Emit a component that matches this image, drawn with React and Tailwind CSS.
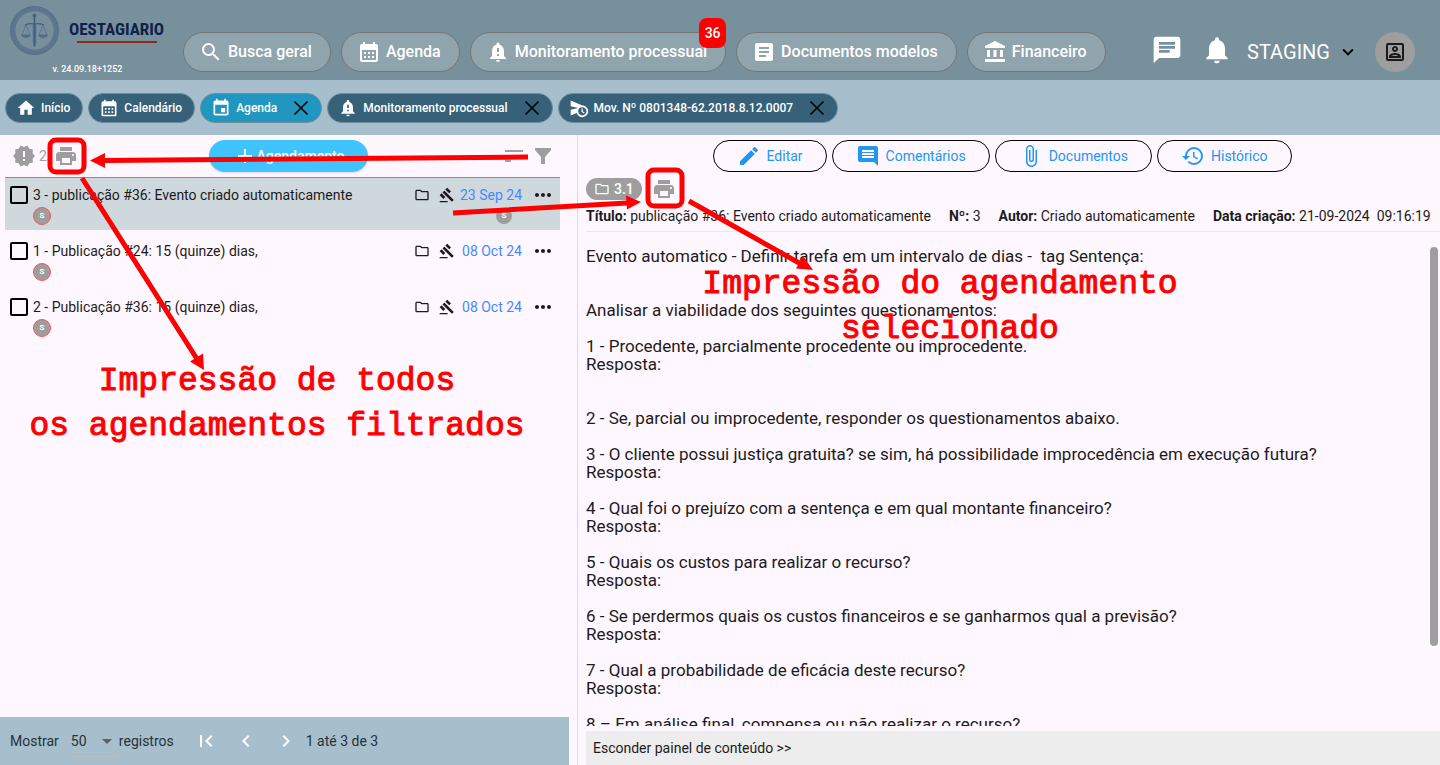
import React, { useState } from 'react';
import {
  MdSearch, MdCalendarMonth, MdNotificationImportant, MdArticle, MdAccountBalance,
  MdChat, MdNotifications, MdKeyboardArrowDown, MdOutlinePortrait, MdHome, MdEvent,
  MdScheduleSend, MdNewReleases, MdPrint, MdSort, MdAdd, MdEdit, MdComment,
  MdAttachFile, MdHistory, MdOutlineFolder, MdGavel, MdMoreHoriz, MdFirstPage,
  MdChevronLeft, MdChevronRight, MdArrowDropDown
} from 'react-icons/md';

const MENU = [
  { label: 'Busca geral', icon: MdSearch },
  { label: 'Agenda', icon: MdCalendarMonth },
  { label: 'Monitoramento processual', icon: MdNotificationImportant, badge: 36 },
  { label: 'Documentos modelos', icon: MdArticle },
  { label: 'Financeiro', icon: MdAccountBalance },
];

const ABAS = [
  { label: 'Início', icon: MdHome },
  { label: 'Calendário', icon: MdCalendarMonth },
  { label: 'Agenda', icon: MdEvent, closable: true },
  { label: 'Monitoramento processual', icon: MdNotificationImportant, closable: true },
  { label: 'Mov. Nº 0801348-62.2018.8.12.0007', icon: MdScheduleSend, closable: true },
];

const AGENDAMENTOS = [
  { id: 3, titulo: '3 - publicação #36: Evento criado automaticamente', data: '23 Sep 24', autor: 'S' },
  { id: 1, titulo: '1 - Publicação #24: 15 (quinze) dias,', data: '08 Oct 24' },
  { id: 2, titulo: '2 - Publicação #36: 15 (quinze) dias,', data: '08 Oct 24' },
];

const ACOES = [
  { label: 'Editar', icon: MdEdit },
  { label: 'Comentários', icon: MdComment },
  { label: 'Documentos', icon: MdAttachFile },
  { label: 'Histórico', icon: MdHistory },
];

const CONTEUDO = `Evento automatico - Definir tarefa em um intervalo de dias -  tag Sentença:


Analisar a viabilidade dos seguintes questionamentos:

1 - Procedente, parcialmente procedente ou improcedente.
Resposta:


2 - Se, parcial ou improcedente, responder os questionamentos abaixo.

3 - O cliente possui justiça gratuita? se sim, há possibilidade improcedência em execução futura?
Resposta:

4 - Qual foi o prejuízo com a sentença e em qual montante financeiro?
Resposta:

5 - Quais os custos para realizar o recurso?
Resposta:

6 - Se perdermos quais os custos financeiros e se ganharmos qual a previsão?
Resposta:

7 - Qual a probabilidade de eficácia deste recurso?
Resposta:

8 – Em análise final, compensa ou não realizar o recurso?`;

const App = () => {
  const [abaAtiva, setAbaAtiva] = useState('Agenda');
  const [selecionado, setSelecionado] = useState(3);

  return (
    <div className="relative flex h-screen flex-col overflow-hidden bg-[#fef7ff] font-['Roboto',sans-serif] text-[#1d1b20]">
      <Header />

      {/* ABAS */}
      <nav className="flex h-[55px] shrink-0 items-center gap-[5px] bg-[#a7bfcd] px-[5px]">
        {ABAS.map((aba) => (
          <Aba key={aba.label} {...aba} ativa={aba.label === abaAtiva} onClick={() => setAbaAtiva(aba.label)} />
        ))}
      </nav>

      <main className="flex min-h-0 flex-1">
        {/* LISTA */}
        <section className="flex w-2/5 flex-col pr-[7px]">
          <div className="flex h-[42px] shrink-0 items-center justify-between pr-[14px] pl-3 text-[#9e9e9e]">
            <div className="flex w-[88px] items-center gap-[3px]">
              <MdNewReleases size={24} />
              <span className="w-3 text-sm">2</span>
              <button aria-label="Imprimir lista"><MdPrint size={24} /></button>
            </div>
            <button className="flex h-8 items-center rounded-full bg-[#40c4ff] px-6 text-sm font-medium text-white shadow-sm">
              <MdAdd size={24} />
              Agendamento
            </button>
            <div className="flex w-[78px] items-center justify-end gap-[5px]">
              <button aria-label="Ordenar"><MdSort size={24} /></button>
              <button aria-label="Filtrar"><FunnelIcon /></button>
            </div>
          </div>

          <ul className="mr-[9px] ml-[5px] flex flex-1 flex-col gap-1 border-t border-[#8f8f8f]">
            {AGENDAMENTOS.map((item) => (
              <Agendamento
                key={item.id}
                {...item}
                ativo={item.id === selecionado}
                onSelect={() => setSelecionado(item.id)}
              />
            ))}
          </ul>

          {/* PAGINAÇÃO */}
          <footer className="flex h-12 shrink-0 items-center bg-[#a7bfcd] pl-[10px] text-sm text-[#263238]">
            <label htmlFor="registros">Mostrar</label>
            <div className="relative ml-3 flex w-12 items-center">
              <select id="registros" defaultValue="50" className="h-8 w-full appearance-none border-b border-[#bdbdbd] bg-transparent outline-none">
                <option>10</option>
                <option>25</option>
                <option>50</option>
              </select>
              <MdArrowDropDown size={24} className="pointer-events-none absolute right-0 text-[#616161]" />
            </div>
            <span>registros</span>
            <div className="ml-3 flex text-white">
              <PageButton icon={MdFirstPage} label="Primeira página" />
              <PageButton icon={MdChevronLeft} label="Página anterior" />
              <PageButton icon={MdChevronRight} label="Próxima página" />
            </div>
            <span>1 até 3 de 3</span>
          </footer>
        </section>

        {/* DETALHES */}
        <section className="ml-px flex min-w-0 flex-1 flex-col border-l border-[#dcdce0] pl-2">
          <div className="flex h-[42px] shrink-0 items-center justify-center gap-[5px] pr-[22px]">
            {ACOES.map(({ label, icon: Icon }) => (
              <button key={label} className="flex h-8 items-center gap-[6px] rounded-full border border-black px-[23px] text-sm text-[#2196f3]">
                <Icon size={24} />
                {label}
              </button>
            ))}
          </div>

          <div className="flex h-6 shrink-0 items-center gap-[10px]">
            <span className="flex h-[22px] items-center gap-1 rounded-full bg-[#9e9e9e] px-2 text-sm font-medium text-white">
              <MdOutlineFolder size={16} />
              3.1
            </span>
            <button aria-label="Imprimir agendamento" className="text-[#9e9e9e]"><MdPrint size={24} /></button>
          </div>

          <div className="flex h-[31px] shrink-0 items-center gap-[18px] border-b border-[#ece6ee] text-sm whitespace-pre">
            <Campo nome="Título" valor="publicação #36: Evento criado automaticamente" />
            <Campo nome="Nº" valor="3" />
            <Campo nome="Autor" valor="Criado automaticamente" />
            <Campo nome="Data criação" valor="21-09-2024  09:16:19" />
          </div>

          <div className="relative mt-[15px] mb-[5px] min-h-0 flex-1 overflow-hidden">
            <p className="text-[17px] leading-[18px] whitespace-pre-wrap">{CONTEUDO}</p>
            <div className="absolute top-0 right-[2px] h-5/6 w-2 rounded-full bg-[#9e9e9e]" />
          </div>

          <button className="h-[34px] shrink-0 bg-[#ededed] pl-[7px] text-left text-sm">
            Esconder painel de conteúdo &gt;&gt;
          </button>
        </section>
      </main>

      <Anotacoes />
    </div>
  );
};

const Header = () => (
  <header className="flex h-20 shrink-0 items-center bg-[#78909c] pr-[25px] text-white">
    <div className="flex w-[183px] shrink-0 flex-col pl-[10px]">
      <div className="flex items-center gap-[10px]">
        <LogoIcon />
        <div className="flex flex-col items-center text-[#0d2149]">
          <span className="font-['Liberation_Sans_Narrow','Roboto_Condensed',sans-serif] text-[17px] leading-6 font-bold">OESTAGIARIO</span>
          <span className="h-[2px] w-20 bg-[#8c2a1c]" />
        </div>
      </div>
      <span className="w-[155px] pt-2 text-center text-[9px] leading-3 font-medium">v. 24.09.18+1252</span>
    </div>

    <nav className="mt-6 flex items-center gap-[10px]">
      {MENU.map(({ label, icon: Icon, badge }) => (
        <button key={label} className="relative flex h-10 items-center gap-[5px] rounded-full border border-[#757575] bg-[#90a4ae] pr-[18px] pl-[15px] font-medium whitespace-nowrap">
          <Icon size={24} />
          {label}
          {badge && (
            <span className="absolute -top-[15px] -right-[1px] flex h-[30px] w-[27px] items-center justify-center rounded-lg bg-[#ff0000] text-sm">
              {badge}
            </span>
          )}
        </button>
      ))}
    </nav>

    <div className="mt-6 ml-auto flex items-center">
      <button aria-label="Mensagens" className="-mt-1"><MdChat size={32} /></button>
      <button aria-label="Notificações" className="-mt-1 ml-[18px]"><MdNotifications size={32} /></button>
      <button className="ml-[14px] flex items-center gap-[7px] text-xl">
        STAGING
        <MdKeyboardArrowDown size={22} className="text-black" />
      </button>
      <button aria-label="Perfil" className="ml-4 flex size-10 items-center justify-center rounded-full bg-[#9e9e9e] text-[#1b1b1b]">
        <MdOutlinePortrait size={24} />
      </button>
    </div>
  </header>
);

const Aba = ({ label, icon: Icon, closable, ativa, onClick }) => (
  <div className={`flex h-[30px] items-center rounded-full border border-[#6d8c9d] pl-[10px] text-white ${ativa ? 'bg-[#2196c0]' : 'bg-[#376179]'} ${closable ? 'pr-2' : 'pr-3'}`}>
    <button onClick={onClick} className="flex items-center gap-[5px] text-xs font-medium whitespace-nowrap">
      <Icon size={20} />
      {label}
    </button>
    {closable && (
      <button aria-label={`Fechar ${label}`} className="ml-3 text-black">
        <CloseIcon />
      </button>
    )}
  </div>
);

const Agendamento = ({ titulo, data, autor, ativo, onSelect }) => (
  <li onClick={onSelect} className={`h-[52px] pr-[5px] pl-[5px] ${ativo ? 'bg-[#cfd8dc]' : ''}`}>
    <div className="flex h-[34px] items-center">
      <label className="flex min-w-0 flex-1 items-center gap-[5px] truncate text-sm">
        <input type="checkbox" className="size-[18px] shrink-0 appearance-none rounded-[2px] border-2 border-black checked:bg-black" />
        {titulo}
      </label>
      <MdOutlineFolder size={16} />
      <MdGavel size={16} className="ml-[9px]" />
      <span className="ml-[5px] min-w-[62px] text-right text-sm text-[#448aff]">{data}</span>
      <button aria-label="Mais opções" className="ml-[9px]"><MdMoreHoriz size={24} /></button>
    </div>
    <div className="-mt-[5px] flex items-center justify-between pr-[43px] pl-[23px]">
      <span className="flex size-[18px] items-center justify-center rounded-full border border-[#ff5252] bg-[#9e9e9e] text-[8px] font-bold text-white">S</span>
      {autor && (
        <span className="flex size-4 items-center justify-center rounded-full bg-[#9e9e9e] text-[8px] font-bold text-white">{autor}</span>
      )}
    </div>
  </li>
);

const Campo = ({ nome, valor }) => (
  <span><b className="font-bold">{nome}:</b> {valor}</span>
);

const PageButton = ({ icon: Icon, label }) => (
  <button aria-label={label} className="flex h-10 w-10 items-center justify-center">
    <Icon size={24} />
  </button>
);

const CloseIcon = () => (
  <svg width="24" height="24" viewBox="0 0 24 24" fill="none" stroke="currentColor" strokeWidth="1.6">
    <path d="M5.500 5.500l13 13M18.500 5.500l-13 13" />
  </svg>
);

const FunnelIcon = () => (
  <svg width="24" height="24" viewBox="0 0 24 24" fill="currentColor">
    <path d="M4 4h16v2l-6 7v7h-4v-7L4 6z" />
  </svg>
);

// Balança dentro do selo circular
const LogoIcon = () => (
  <svg width="49" height="49" viewBox="0 0 49 49" fill="none" stroke="#3f5f82">
    <circle cx="24.5" cy="24.5" r="22" strokeWidth="4.500" opacity="0.4" />
    <circle cx="24.5" cy="24.5" r="22" strokeWidth="3" strokeDasharray="1 1.5" opacity="0.4" />
    <circle cx="24.5" cy="24.5" r="24" strokeWidth="0.8" opacity="0.6" />
    <circle cx="24.5" cy="24.5" r="19.5" strokeWidth="0.8" opacity="0.6" />
    <path d="M24.5 10v30" strokeWidth="1.6" />
    <path d="M23 18h3v18l-1.500 5l-1.500-5z" fill="#3f5f82" fillOpacity="0.5" strokeWidth="0.4" />
    <path d="M15 19q5-2 9.500-1q4.500-1 9.500 1" strokeWidth="1.2" />
    <circle cx="24.500" cy="9.500" r="1.500" fill="#3f5f82" />
    <path d="M16 19l-4 10M16 19l4 10M33 19l-4 10M33 19l4 10" strokeWidth="0.5" />
    <path d="M11.500 29h9q-1 2.500-4.500 2.500T11.500 29zM28.500 29h9q-1 2.500-4.500 2.500T28.500 29z" fill="#3f5f82" fillOpacity="0.6" strokeWidth="0.6" />
  </svg>
);

// Setas e legendas desenhadas por cima da tela
const Anotacoes = () => (
  <div className="pointer-events-none absolute inset-0 text-[#ff0000]">
    <svg width="1440" height="765" viewBox="0 0 1440 765" className="absolute top-0 left-0" fill="none" stroke="currentColor" strokeWidth="5">
      <rect x="50" y="140" width="34" height="32" rx="6" />
      <rect x="648" y="170" width="34" height="36" rx="6" />
      <path d="M528 157L104 160.500M82 178L197 359M453 213L627 203M689 201L801 264" />
      <path d="M90 160.500L105 153v15zM204 370l-14-8.500l13-8zM641 202l-15-6.500l1 14zM813 270l-17-1.500l7-12.500z" fill="currentColor" stroke="none" />
    </svg>
    <p className="absolute top-[359px] left-[27px] w-[500px] text-center font-['Liberation_Mono',monospace] text-[33px] leading-[45px] [-webkit-text-stroke:1px_#ff0000]">
      Impressão de todos<br />os agendamentos filtrados
    </p>
    <p className="absolute top-[262px] left-[690px] w-[500px] text-center font-['Liberation_Mono',monospace] text-[33px] leading-[45px] [-webkit-text-stroke:1px_#ff0000]">
      Impressão do agendamento<br />&nbsp;selecionado
    </p>
  </div>
);

export default App;
